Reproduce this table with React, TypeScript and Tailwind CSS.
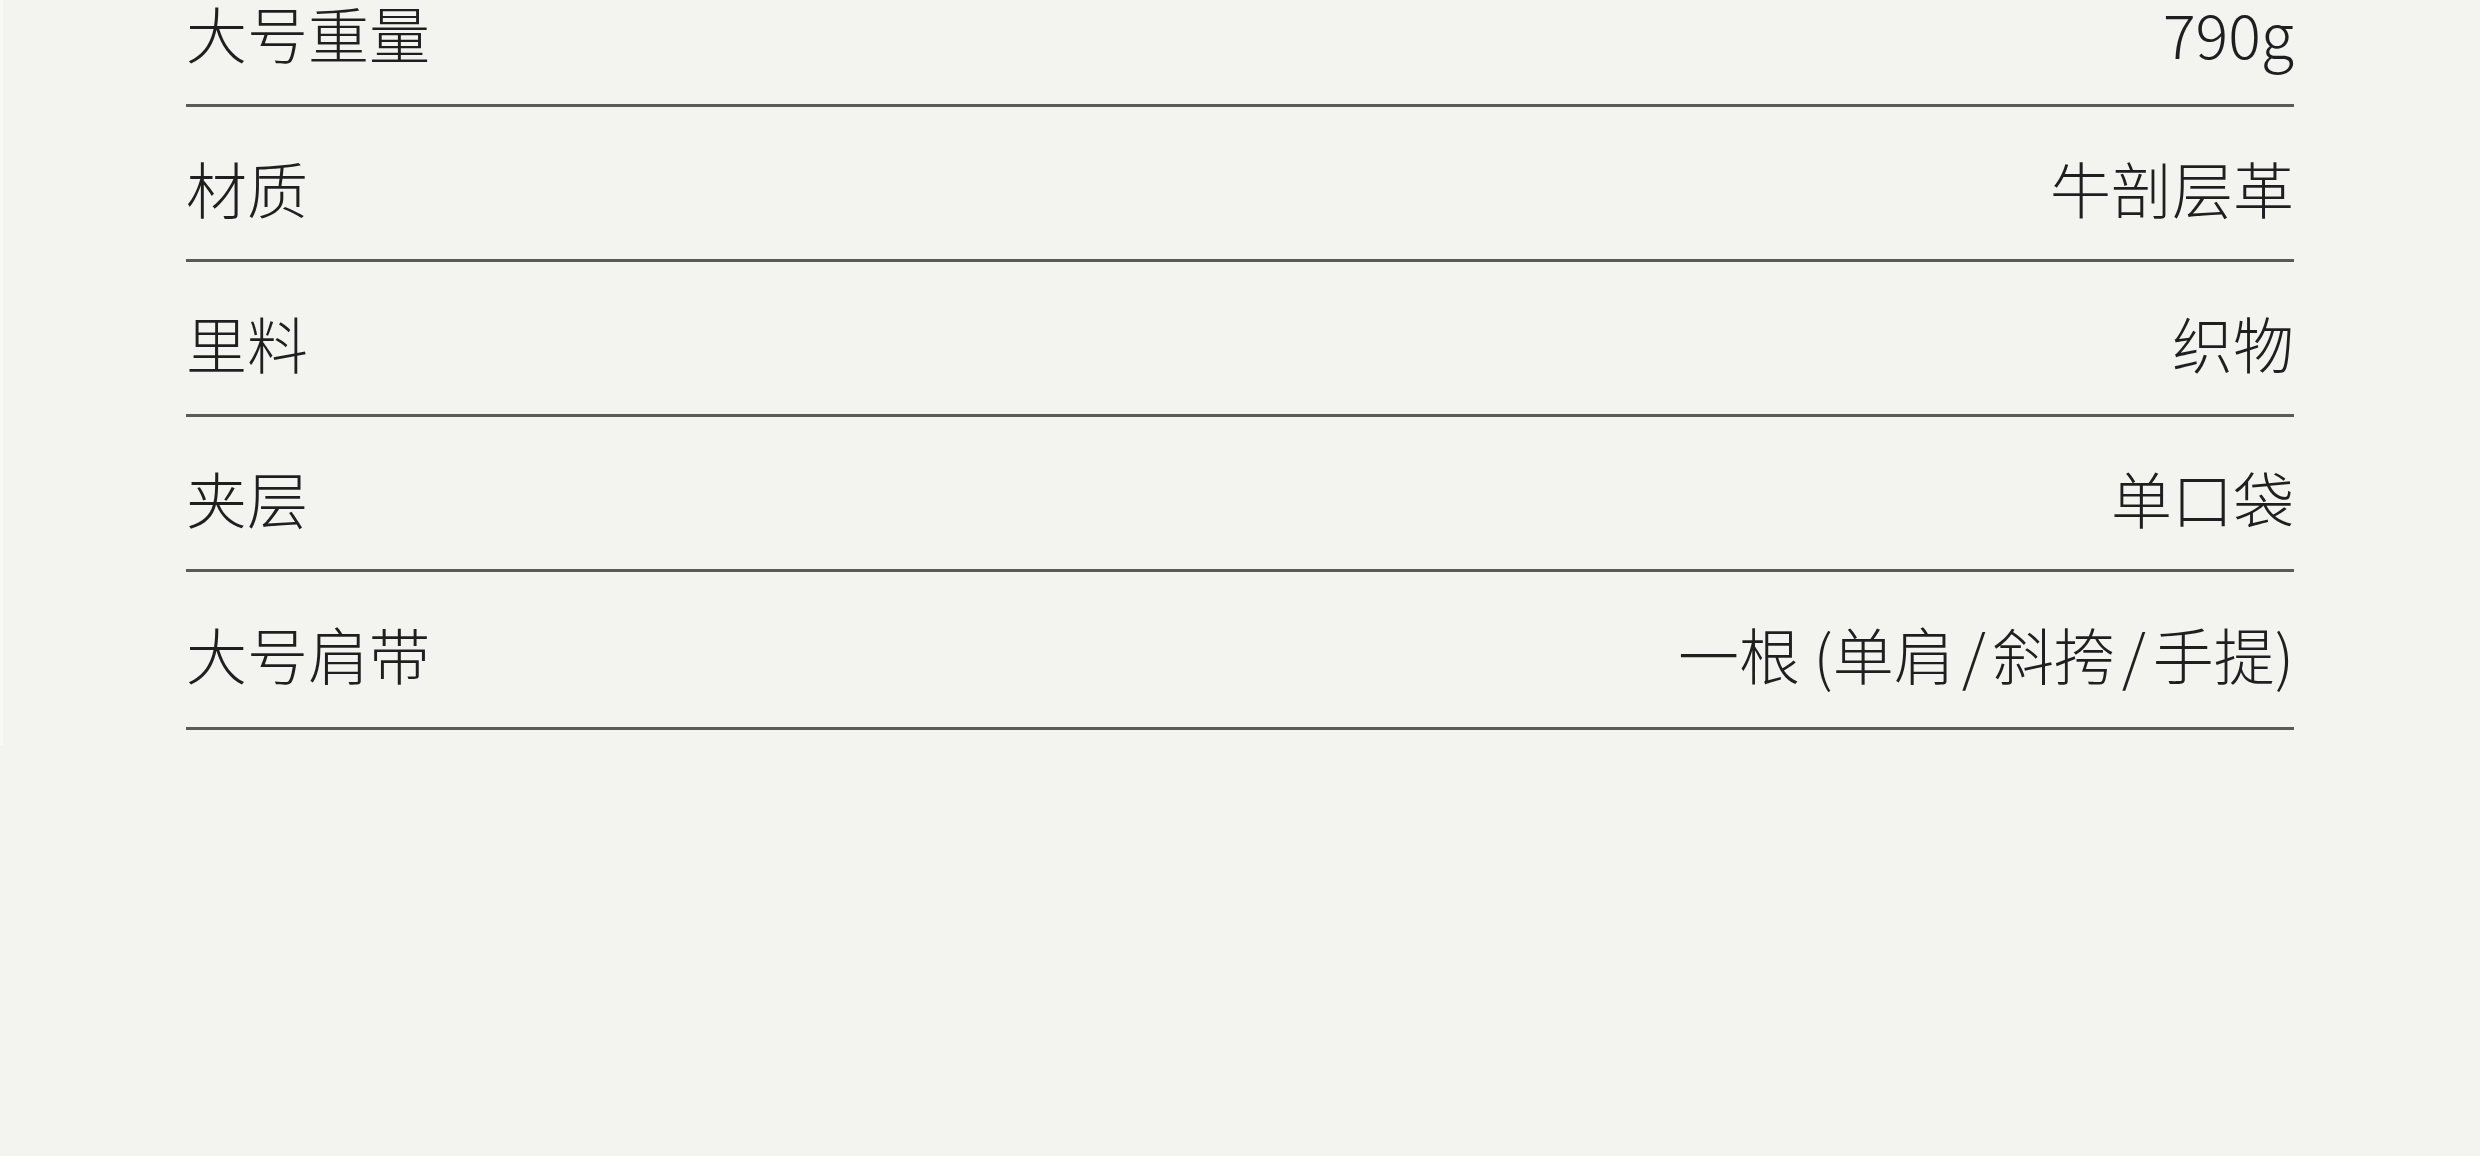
const specs = [
    { label: "大号重量", value: ["790g"] },
    { label: "材质", value: ["牛剖层革"] },
    { label: "里料", value: ["织物"] },
    { label: "夹层", value: ["单口袋"] },
    { label: "大号肩带", value: ["一根 (单肩", "斜挎", "手提)"] },
];

export default function App() {
    return (
        <div
            className="min-h-[1156px] w-full overflow-hidden bg-[#f3f3ef] text-[#1f1f1f]"
            style={{ fontFamily: '"Noto Sans CJK SC", "Noto Sans", sans-serif' }}
        >
            <div className="flex h-[745px] flex-col border-l-[3px] border-[#f8f8f6] pl-[183px] pr-[186px]">
                <div className="-mt-[48px]">
                    {specs.map((row, idx) => (
                        <div
                            key={idx}
                            className={`flex items-center justify-between border-b-[3px] border-[#5a5a58] pt-2 text-[61px] font-light leading-none ${
                                idx === specs.length - 1 ? "h-[158px]" : "h-[155px]"
                            }`}
                        >
                            <span>{row.label}</span>
                            <span className="flex">
                                {row.value.map((part, i) => (
                                    <span key={i} className="flex">
                                        {i > 0 && <span className="mx-[7px]">/</span>}
                                        <span className="whitespace-pre">{part}</span>
                                    </span>
                                ))}
                            </span>
                        </div>
                    ))}
                </div>
            </div>
        </div>
    );
}
